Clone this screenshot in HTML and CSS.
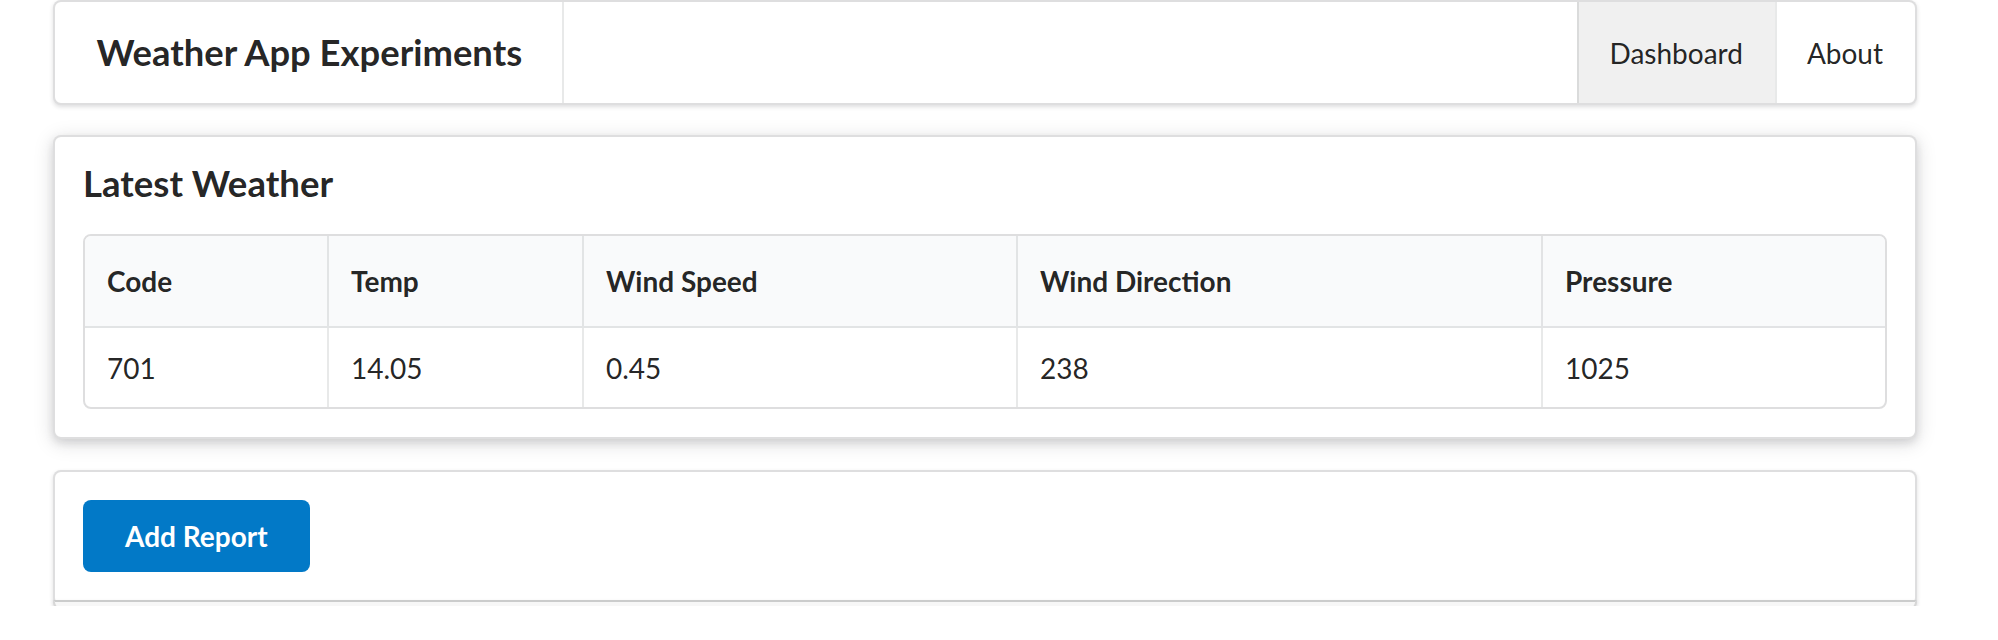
FILE: index.html
```html
<!DOCTYPE html>
<html lang="en">
<head>
<meta charset="utf-8">
<title>Weather App Experiments</title>
<link rel="stylesheet" href="styles.css">
</head>
<body>
<div class="page">
  <nav class="menu">
    <div class="brand">Weather App Experiments</div>
    <div class="menu-right">
      <a class="item active">Dashboard</a>
      <a class="item">About</a>
    </div>
  </nav>

  <section class="segment raised">
    <h3 class="title">Latest Weather</h3>
    <table class="data">
      <colgroup>
        <col class="c1"><col class="c2"><col class="c3"><col class="c4"><col class="c5">
      </colgroup>
      <thead>
        <tr><th>Code</th><th>Temp</th><th>Wind Speed</th><th>Wind Direction</th><th>Pressure</th></tr>
      </thead>
      <tbody>
        <tr><td>701</td><td>14.05</td><td>0.45</td><td>238</td><td>1025</td></tr>
      </tbody>
    </table>
  </section>

  <section class="segment stacked">
    <button class="btn-primary">Add Report</button>
  </section>
</div>
</body>
</html>
```

FILE: styles.css
```css
* { box-sizing: border-box; }

html, body {
  margin: 0;
  padding: 0;
  background: #ffffff;
}

body {
  font-family: Lato, "Open Sans", "Liberation Sans", sans-serif;
  font-size: 28px;
  line-height: 40px;
  color: rgba(0, 0, 0, 0.87);
}

.page {
  margin-left: 53px;
  width: 1864px;
}

/* ---------- menu ---------- */
.menu {
  display: flex;
  height: 105px;
  background: #fff;
  border: 2px solid rgba(34, 36, 38, 0.15);
  border-radius: 8px;
  box-shadow: 0 2px 4px 0 rgba(34, 36, 38, 0.15);
  overflow: hidden;
}

.brand {
  display: flex;
  align-items: center;
  padding: 0 41.6px;
  font-size: 36.4px;
  font-weight: 700;
  line-height: 1;
  box-shadow: inset -2px 0 0 rgba(34, 36, 38, 0.1);
}

.menu-right {
  display: flex;
  margin-left: auto;
}

.item {
  display: flex;
  align-items: center;
  padding: 0 32px;
  font-size: 28px;
  line-height: 1;
  color: rgba(0, 0, 0, 0.87);
  text-decoration: none;
  box-shadow: inset 2px 0 0 rgba(34, 36, 38, 0.1);
}

.item.active {
  background: rgba(0, 0, 0, 0.06);
}

/* ---------- segments ---------- */
.segment {
  position: relative;
  background: #fff;
  border: 2px solid rgba(34, 36, 38, 0.15);
  border-radius: 8px;
  padding: 28px;
}

.segment.raised {
  margin-top: 30px;
  box-shadow: 0 4px 8px 0 rgba(34, 36, 38, 0.12), 0 4px 20px 0 rgba(34, 36, 38, 0.15);
}

.segment.stacked {
  margin-top: 31px;
  padding-bottom: 32px;
  box-shadow: 0 2px 4px 0 rgba(34, 36, 38, 0.15);
}

.segment.stacked::after {
  content: "";
  position: absolute;
  left: -2px;
  right: -2px;
  bottom: -6px;
  height: 6px;
  border: 2px solid rgba(34, 36, 38, 0.15);
  border-top-color: rgba(34, 36, 38, 0.2);
  border-radius: 0 0 8px 8px;
  background: #f7f7f7;
  box-shadow: 0 2px 4px 0 rgba(34, 36, 38, 0.12);
}

.title {
  margin: -5px 0 28px;
  font-size: 36.6px;
  font-weight: 700;
  line-height: 46px;
}

/* ---------- table ---------- */
.data {
  width: 100%;
  table-layout: fixed;
  border-collapse: separate;
  border-spacing: 0;
  border: 2px solid rgba(34, 36, 38, 0.15);
  border-radius: 8px;
  text-align: left;
}

.c1 { width: 242px; }
.c2 { width: 255px; }
.c3 { width: 434px; }
.c4 { width: 525px; }
.c5 { width: 344px; }

.data th {
  padding: 25px 22px;
  font-weight: 700;
  background: #f9fafb;
  border-bottom: 2px solid rgba(34, 36, 38, 0.1);
}

.data th:first-child { border-top-left-radius: 6px; }
.data th:last-child { border-top-right-radius: 6px; }

.data td {
  padding: 20px 22px 19px;
  font-weight: 400;
}

.data th + th,
.data td + td {
  border-left: 2px solid rgba(34, 36, 38, 0.1);
}

/* ---------- button ---------- */
.btn-primary {
  display: block;
  margin: 0;
  padding: 22px 42px;
  border: 0;
  border-radius: 8px;
  background: #0279c7;
  color: #fff;
  font-family: inherit;
  font-size: 28px;
  font-weight: 700;
  line-height: 28px;
}
```
